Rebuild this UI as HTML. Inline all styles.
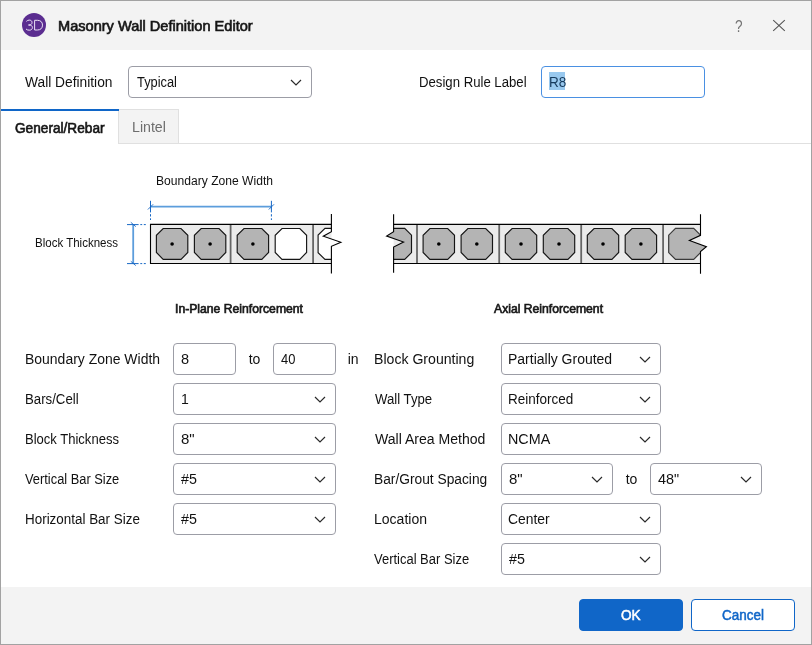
<!DOCTYPE html>
<html>
<head>
<meta charset="utf-8">
<title>Masonry Wall Definition Editor</title>
<style>
html,body{margin:0;padding:0;background:#fff;}
body{width:812px;height:645px;overflow:hidden;font-family:"Liberation Sans",sans-serif;color:#1b1b1b;}
#win{position:relative;width:812px;height:645px;box-sizing:border-box;background:transparent;overflow:hidden;will-change:transform;}
#frame{position:absolute;left:0;top:0;width:810px;height:643px;border:1px solid #a2a2a2;z-index:50;pointer-events:none;}
#titlebar{position:absolute;left:1px;top:1px;width:810px;height:49px;background:#f3f3f3;}
#footer{position:absolute;left:1px;top:587px;width:810px;height:57px;background:#f3f3f3;}
.t{position:absolute;white-space:nowrap;font-size:14px;line-height:32px;height:32px;color:#111;}
.b{font-weight:normal;-webkit-text-stroke:0.65px #1b1b1b;}
.s12{font-size:12px;line-height:20px;height:20px;}
.box{position:absolute;box-sizing:border-box;height:32px;border:1px solid #9c9da6;border-radius:4px;background:#fff;}
.box .v{position:absolute;left:8px;top:0;font-size:14px;line-height:30px;white-space:nowrap;color:#111;}
.chev{position:absolute;right:9px;top:12px;width:12px;height:7px;}
.btn{position:absolute;box-sizing:border-box;top:599px;height:32px;width:104px;border-radius:4px;text-align:center;font-size:15px;line-height:30px;}
</style>
</head>
<body>
<div id="win">
  <div id="titlebar"></div>
  <div id="footer"></div>

  <!-- app icon -->
  <svg style="position:absolute;left:22px;top:13px" width="24" height="24" viewBox="0 0 24 24">
    <circle cx="12" cy="12" r="12" fill="#5b2d90"/>
    <path d="M4.4 8.4 C5.2 7.5 6.2 7.1 7.3 7.1 C9 7.1 10 8.1 10 9.5 C10 11.1 8.8 12 7 12 L6.1 12 M7 12 C9.2 12 10.4 13 10.4 14.6 C10.4 16.2 9.1 17.2 7.2 17.2 C6 17.2 4.8 16.8 4 16" fill="none" stroke="#f1eafa" stroke-width="0.95"/>
    <path d="M12.6 7.3 L12.6 17 L15.4 17 C18.6 17 20.5 15.2 20.5 12.1 C20.5 9.1 18.6 7.3 15.4 7.3 Z" fill="none" stroke="#f1eafa" stroke-width="0.95"/>
  </svg>
  <div class="t b" id="title" style="font-size:14.2px;left:57.9px;top:10px;transform:scaleX(1.0274);transform-origin:0 0;">Masonry Wall Definition Editor</div>

  <!-- help + close -->
  <div class="t" id="help" style="left:735.2px;top:10.8px;font-size:16.6px;color:#747474;transform:scaleX(0.82);transform-origin:0 0;">?</div>
  <svg style="position:absolute;left:772px;top:19px" width="14" height="14" viewBox="0 0 14 14">
    <path d="M1.2 1.2 L12.8 11.8 M12.8 1.2 L1.2 11.8" stroke="#555" stroke-width="1.1" fill="none"/>
  </svg>

  <!-- top row -->
  <div class="t" id="l_walldef" style="left:25.2px;top:66px;transform:scaleX(0.9832);transform-origin:0 0;">Wall Definition</div>
  <div class="box" style="left:128px;top:66px;width:184px;"><span class="v" id="v_typical" style="left:7.5px;transform:scaleX(0.9169);transform-origin:0 0;">Typical</span>
    <svg class="chev" viewBox="0 0 12 7"><path d="M1 1 L6 6 L11 1" stroke="#2a2a2a" stroke-width="1.2" fill="none"/></svg></div>
  <div class="t" id="l_drl" style="left:418.6px;top:66px;transform:scaleX(0.9402);transform-origin:0 0;">Design Rule Label</div>
  <div class="box" style="left:541px;top:66px;width:164px;border-color:#4a90e2;">
    <div style="position:absolute;left:7px;top:5px;width:16px;height:18px;background:#99c9ef;"></div>
    <span class="v" id="v_r8" style="color:#163a5c;left:7.2px;transform:scaleX(0.97);transform-origin:0 0;">R8</span></div>

  <!-- tabs -->
  <div style="position:absolute;left:1px;top:109px;width:118px;height:2px;background:#1066c8;z-index:3;"></div>
  <div style="position:absolute;left:118px;top:143px;width:693px;height:1px;background:#e0e0e0;"></div>
  <div style="position:absolute;left:118px;top:109px;width:61px;height:35px;box-sizing:border-box;border:1px solid #e0e0e0;background:#f3f3f3;"></div>
  <div class="t b" id="tab1" style="left:15.1px;top:112px;transform:scaleX(0.9750);transform-origin:0 0;">General/Rebar</div>
  <div class="t" id="tab2" style="left:131.5px;top:111px;color:#6d6d6d;transform:scaleX(1.0129);transform-origin:0 0;">Lintel</div>

  <!-- diagram labels -->
  <div class="t s12" id="d_bzw" style="left:155.7px;top:171px;transform:scaleX(1.0083);transform-origin:0 0;">Boundary Zone Width</div>
  <div class="t s12" id="d_bt" style="left:34.5px;top:233px;transform:scaleX(0.9598);transform-origin:0 0;">Block Thickness</div>
  <div class="t s12 b" id="h_inplane" style="left:174.8px;top:299px;transform:scaleX(1.0151);transform-origin:0 0;">In-Plane Reinforcement</div>
  <div class="t s12 b" id="h_axial" style="left:493.5px;top:299px;transform:scaleX(1.0153);transform-origin:0 0;">Axial Reinforcement</div>

  <!-- DIAGRAMS -->
  <svg id="diag" style="position:absolute;left:0;top:190px" width="812" height="100" viewBox="0 190 812 100">
    <rect x="150.5" y="224.4" width="181" height="39.1" fill="#ebebeb"/>
    <line x1="230.6" y1="224.4" x2="230.6" y2="263.5" stroke="#666" stroke-width="1.8"/>
    <line x1="313.1" y1="224.4" x2="313.1" y2="263.5" stroke="#666" stroke-width="1.8"/>
    <polygon points="163.2,228.5 181.0,228.5 187.8,235.3 187.8,252.5 181.0,259.3 163.2,259.3 156.4,252.5 156.4,235.3" fill="#b4b4b4" stroke="#151515" stroke-width="1.15"/><circle cx="172.1" cy="244.0" r="1.8" fill="#000"/>
    <polygon points="201.2,228.5 219.0,228.5 225.8,235.3 225.8,252.5 219.0,259.3 201.2,259.3 194.4,252.5 194.4,235.3" fill="#b4b4b4" stroke="#151515" stroke-width="1.15"/><circle cx="210.1" cy="244.0" r="1.8" fill="#000"/>
    <polygon points="244.0,228.5 261.8,228.5 268.6,235.3 268.6,252.5 261.8,259.3 244.0,259.3 237.2,252.5 237.2,235.3" fill="#b4b4b4" stroke="#151515" stroke-width="1.15"/><circle cx="252.9" cy="244.0" r="1.8" fill="#000"/>
    <polygon points="282.0,228.5 299.8,228.5 306.6,235.3 306.6,252.5 299.8,259.3 282.0,259.3 275.2,252.5 275.2,235.3" fill="#fff" stroke="#151515" stroke-width="1.15"/>
    <path d="M331.4 228.4 L325 228.4 L318.1 235 L318.1 252.7 L325 259.4 L331.4 259.4 L331.4 246.3 L340.9 242.2 L323.3 236.2 L331.4 231.7 Z" fill="#fff" stroke="none"/>
    <path d="M331.4 228.4 L325 228.4 L318.1 235 L318.1 252.7 L325 259.4 L331.4 259.4" fill="none" stroke="#151515" stroke-width="1.15"/>
    <path d="M331.4 224.4 L150.5 224.4 L150.5 263.5 L331.4 263.5" fill="none" stroke="#000" stroke-width="1.1"/>
    <path d="M331.4 214.1 L331.4 231.7 L323.3 236.2 L340.9 242.2 L331.4 246.3 L331.4 273.6" fill="none" stroke="#000" stroke-width="1.1" stroke-linejoin="miter"/>
    <line x1="150.5" y1="206.7" x2="271.4" y2="206.7" stroke="#5c9ddc" stroke-width="1.7"/>
    <line x1="150.5" y1="200.8" x2="150.5" y2="212.4" stroke="#1767c4" stroke-width="1"/>
    <line x1="150.5" y1="214.2" x2="150.5" y2="216.5" stroke="#1767c4" stroke-width="1"/>
    <line x1="150.5" y1="218.3" x2="150.5" y2="220" stroke="#1767c4" stroke-width="1"/>
    <line x1="147.9" y1="209.5" x2="153.1" y2="204.3" stroke="#1767c4" stroke-width="0.9"/>
    <line x1="271.4" y1="200.8" x2="271.4" y2="212.4" stroke="#1767c4" stroke-width="1"/>
    <line x1="271.4" y1="214.2" x2="271.4" y2="216.5" stroke="#1767c4" stroke-width="1"/>
    <line x1="271.4" y1="218.3" x2="271.4" y2="220" stroke="#1767c4" stroke-width="1"/>
    <line x1="268.8" y1="209.5" x2="274.0" y2="204.3" stroke="#1767c4" stroke-width="0.9"/>
    <line x1="133.2" y1="224.6" x2="133.2" y2="263.6" stroke="#5c9ddc" stroke-width="1.8"/>
    <line x1="127" y1="224.6" x2="138.6" y2="224.6" stroke="#1767c4" stroke-width="1"/>
    <line x1="140.3" y1="224.6" x2="142.2" y2="224.6" stroke="#1767c4" stroke-width="1"/>
    <line x1="143.8" y1="224.6" x2="145.8" y2="224.6" stroke="#1767c4" stroke-width="1"/>
    <line x1="130.8" y1="222.3" x2="135.8" y2="226.6" stroke="#1767c4" stroke-width="0.9"/>
    <line x1="127" y1="263.6" x2="138.6" y2="263.6" stroke="#1767c4" stroke-width="1"/>
    <line x1="140.3" y1="263.6" x2="142.2" y2="263.6" stroke="#1767c4" stroke-width="1"/>
    <line x1="143.8" y1="263.6" x2="145.8" y2="263.6" stroke="#1767c4" stroke-width="1"/>
    <line x1="130.8" y1="261.3" x2="135.8" y2="265.6" stroke="#1767c4" stroke-width="0.9"/>
    <rect x="393.6" y="224.4" width="306.9" height="39.1" fill="#ebebeb"/>
    <line x1="417.0" y1="224.4" x2="417.0" y2="263.5" stroke="#666" stroke-width="1.8"/>
    <line x1="499.2" y1="224.4" x2="499.2" y2="263.5" stroke="#666" stroke-width="1.8"/>
    <line x1="581.2" y1="224.4" x2="581.2" y2="263.5" stroke="#666" stroke-width="1.8"/>
    <line x1="663.1" y1="224.4" x2="663.1" y2="263.5" stroke="#666" stroke-width="1.8"/>
    <polygon points="429.9,228.5 447.7,228.5 454.5,235.3 454.5,252.5 447.7,259.3 429.9,259.3 423.1,252.5 423.1,235.3" fill="#b4b4b4" stroke="#151515" stroke-width="1.15"/><circle cx="438.8" cy="244.0" r="1.8" fill="#000"/>
    <polygon points="467.9,228.5 485.7,228.5 492.5,235.3 492.5,252.5 485.7,259.3 467.9,259.3 461.1,252.5 461.1,235.3" fill="#b4b4b4" stroke="#151515" stroke-width="1.15"/><circle cx="476.8" cy="244.0" r="1.8" fill="#000"/>
    <polygon points="512.1,228.5 529.9,228.5 536.7,235.3 536.7,252.5 529.9,259.3 512.1,259.3 505.3,252.5 505.3,235.3" fill="#b4b4b4" stroke="#151515" stroke-width="1.15"/><circle cx="521.0" cy="244.0" r="1.8" fill="#000"/>
    <polygon points="550.1,228.5 567.9,228.5 574.7,235.3 574.7,252.5 567.9,259.3 550.1,259.3 543.3,252.5 543.3,235.3" fill="#b4b4b4" stroke="#151515" stroke-width="1.15"/><circle cx="559.0" cy="244.0" r="1.8" fill="#000"/>
    <polygon points="594.1,228.5 611.9,228.5 618.7,235.3 618.7,252.5 611.9,259.3 594.1,259.3 587.3,252.5 587.3,235.3" fill="#b4b4b4" stroke="#151515" stroke-width="1.15"/><circle cx="603.0" cy="244.0" r="1.8" fill="#000"/>
    <polygon points="632.0,228.5 649.8,228.5 656.6,235.3 656.6,252.5 649.8,259.3 632.0,259.3 625.2,252.5 625.2,235.3" fill="#b4b4b4" stroke="#151515" stroke-width="1.15"/><circle cx="640.9" cy="244.0" r="1.8" fill="#000"/>
    <path d="M393.6 228.4 L404.7 228.4 L411.5 235.2 L411.5 252.6 L404.7 259.4 L393.6 259.4 L393.6 247.1 L403.6 242 L386.6 236 L393.6 231.6 Z" fill="#b4b4b4" stroke="none"/>
    <path d="M393.6 228.4 L404.7 228.4 L411.5 235.2 L411.5 252.6 L404.7 259.4 L393.6 259.4" fill="none" stroke="#151515" stroke-width="1.15"/>
    <path d="M700.5 235.3 L689.4 240.5 L706.4 246.7 L700.5 251.5 L700.5 252.6 L693.7 259.4 L675.5 259.4 L668.7 252.6 L668.7 235.2 L675.5 228.4 L693.7 228.4 L700.5 235.2 Z" fill="#b4b4b4" stroke="none"/>
    <path d="M700.5 252.6 L693.7 259.4 L675.5 259.4 L668.7 252.6 L668.7 235.2 L675.5 228.4 L693.7 228.4 L700.5 235.2" fill="none" stroke="#3a3a3a" stroke-width="1.2"/>
    <path d="M393.6 224.4 L700.5 224.4 M393.6 263.5 L700.5 263.5" fill="none" stroke="#000" stroke-width="1.1"/>
    <path d="M393.6 214.2 L393.6 231.6 L386.6 236 L403.6 242 L393.6 247.1 L393.6 272.7" fill="none" stroke="#000" stroke-width="1.1"/>
    <path d="M700.5 214.2 L700.5 235.3 L689.4 240.5 L706.4 246.7 L700.5 251.5 L700.5 273.7" fill="none" stroke="#000" stroke-width="1.1"/>
  </svg>

  <!-- left form -->
  <div class="t" id="l_bzw" style="left:25px;top:343px;transform:scaleX(0.9975);transform-origin:0 0;">Boundary Zone Width</div>
  <div class="box" style="left:173px;top:343px;width:63px;"><span class="v" id="v_8" style="left:6.7px;transform:scaleX(1.04);transform-origin:0 0;">8</span></div>
  <div class="t" id="l_to1" style="left:248.7px;top:343px;">to</div>
  <div class="box" style="left:273px;top:343px;width:63px;"><span class="v" id="v_40" style="left:7.2px;transform:scaleX(0.925);transform-origin:0 0;">40</span></div>
  <div class="t" id="l_in" style="left:347.7px;top:343px;">in</div>

  <div class="t" id="l_bars" style="left:25px;top:383px;transform:scaleX(0.9440);transform-origin:0 0;">Bars/Cell</div>
  <div class="box" style="left:173px;top:383px;width:163px;"><span class="v" id="v_1" style="left:7.0px;">1</span>
    <svg class="chev" viewBox="0 0 12 7"><path d="M1 1 L6 6 L11 1" stroke="#2a2a2a" stroke-width="1.2" fill="none"/></svg></div>

  <div class="t" id="l_bt" style="left:25px;top:423px;transform:scaleX(0.9308);transform-origin:0 0;">Block Thickness</div>
  <div class="box" style="left:173px;top:423px;width:163px;"><span class="v" id="v_8in" style="left:6.5px;transform:scaleX(1.07);transform-origin:0 0;">8"</span>
    <svg class="chev" viewBox="0 0 12 7"><path d="M1 1 L6 6 L11 1" stroke="#2a2a2a" stroke-width="1.2" fill="none"/></svg></div>

  <div class="t" id="l_vbs" style="left:24.8px;top:463px;transform:scaleX(0.9175);transform-origin:0 0;">Vertical Bar Size</div>
  <div class="box" style="left:173px;top:463px;width:163px;"><span class="v" id="v_n5a" style="left:7.1px;transform:scaleX(1.02);transform-origin:0 0;">#5</span>
    <svg class="chev" viewBox="0 0 12 7"><path d="M1 1 L6 6 L11 1" stroke="#2a2a2a" stroke-width="1.2" fill="none"/></svg></div>

  <div class="t" id="l_hbs" style="left:25px;top:503px;transform:scaleX(0.9588);transform-origin:0 0;">Horizontal Bar Size</div>
  <div class="box" style="left:173px;top:503px;width:163px;"><span class="v" id="v_n5b" style="left:7.1px;transform:scaleX(1.02);transform-origin:0 0;">#5</span>
    <svg class="chev" viewBox="0 0 12 7"><path d="M1 1 L6 6 L11 1" stroke="#2a2a2a" stroke-width="1.2" fill="none"/></svg></div>

  <!-- right form -->
  <div class="t" id="r_bg" style="left:374.4px;top:343px;transform:scaleX(1.0070);transform-origin:0 0;">Block Grounting</div>
  <div class="box" style="left:501px;top:343px;width:160px;"><span class="v" id="v_pg" style="left:5.8px;transform:scaleX(0.9987);transform-origin:0 0;">Partially Grouted</span>
    <svg class="chev" viewBox="0 0 12 7"><path d="M1 1 L6 6 L11 1" stroke="#2a2a2a" stroke-width="1.2" fill="none"/></svg></div>

  <div class="t" id="r_wt" style="left:374.6px;top:383px;transform:scaleX(0.9427);transform-origin:0 0;">Wall Type</div>
  <div class="box" style="left:501px;top:383px;width:160px;"><span class="v" id="v_re" style="left:6.1px;transform:scaleX(0.9636);transform-origin:0 0;">Reinforced</span>
    <svg class="chev" viewBox="0 0 12 7"><path d="M1 1 L6 6 L11 1" stroke="#2a2a2a" stroke-width="1.2" fill="none"/></svg></div>

  <div class="t" id="r_wam" style="left:374.6px;top:423px;transform:scaleX(1.0041);transform-origin:0 0;">Wall Area Method</div>
  <div class="box" style="left:501px;top:423px;width:160px;"><span class="v" id="v_nc" style="left:5.7px;transform:scaleX(1.0235);transform-origin:0 0;">NCMA</span>
    <svg class="chev" viewBox="0 0 12 7"><path d="M1 1 L6 6 L11 1" stroke="#2a2a2a" stroke-width="1.2" fill="none"/></svg></div>

  <div class="t" id="r_bgs" style="left:374.4px;top:463px;transform:scaleX(0.9832);transform-origin:0 0;">Bar/Grout Spacing</div>
  <div class="box" style="left:501px;top:463px;width:112px;"><span class="v" id="v_8in2" style="left:6.5px;transform:scaleX(1.07);transform-origin:0 0;">8"</span>
    <svg class="chev" viewBox="0 0 12 7"><path d="M1 1 L6 6 L11 1" stroke="#2a2a2a" stroke-width="1.2" fill="none"/></svg></div>
  <div class="t" id="l_to2" style="left:625.7px;top:463px;">to</div>
  <div class="box" style="left:650px;top:463px;width:112px;"><span class="v" id="v_48" style="left:6.9px;transform:scaleX(1.0308);transform-origin:0 0;">48"</span>
    <svg class="chev" viewBox="0 0 12 7"><path d="M1 1 L6 6 L11 1" stroke="#2a2a2a" stroke-width="1.2" fill="none"/></svg></div>

  <div class="t" id="r_loc" style="left:374.4px;top:503px;transform:scaleX(1.0008);transform-origin:0 0;">Location</div>
  <div class="box" style="left:501px;top:503px;width:160px;"><span class="v" id="v_ce" style="left:6.2px;transform:scaleX(0.9908);transform-origin:0 0;">Center</span>
    <svg class="chev" viewBox="0 0 12 7"><path d="M1 1 L6 6 L11 1" stroke="#2a2a2a" stroke-width="1.2" fill="none"/></svg></div>

  <div class="t" id="r_vbs" style="left:374.3px;top:543px;transform:scaleX(0.9259);transform-origin:0 0;">Vertical Bar Size</div>
  <div class="box" style="left:501px;top:543px;width:160px;"><span class="v" id="v_n5c" style="left:7.1px;transform:scaleX(1.02);transform-origin:0 0;">#5</span>
    <svg class="chev" viewBox="0 0 12 7"><path d="M1 1 L6 6 L11 1" stroke="#2a2a2a" stroke-width="1.2" fill="none"/></svg></div>

  <!-- buttons -->
  <div class="btn" style="left:579px;background:#1066c8;border:1px solid #1066c8;"></div>
  <div class="t" id="b_ok" style="left:621.4px;top:599px;color:#fff;-webkit-text-stroke:0.5px #fff;transform:scaleX(0.9721);transform-origin:0 0;">OK</div>
  <div class="btn" style="left:691px;background:#fff;border:1px solid #1066c8;"></div>
  <div class="t" id="b_cancel" style="left:722.2px;top:599px;color:#1066c8;-webkit-text-stroke:0.5px #1066c8;transform:scaleX(0.9614);transform-origin:0 0;">Cancel</div>

  <div id="frame"></div>
</div>
</body>
</html>
